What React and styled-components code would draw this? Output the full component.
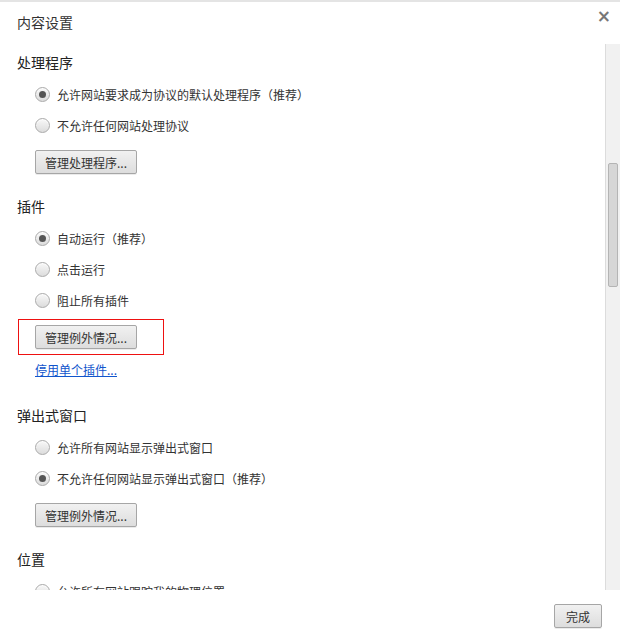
import React from 'react';
import styled, { createGlobalStyle } from 'styled-components';

const GlobalStyle = createGlobalStyle`
  html, body {
    margin: 0;
    padding: 0;
    background: #fff;
  }
  body {
    font-family: "Noto Sans CJK SC", "Noto Sans", "Liberation Sans", sans-serif;
  }
`;

const sections = [
  {
    title: '处理程序',
    options: [
      { label: '允许网站要求成为协议的默认处理程序（推荐）', checked: true },
      { label: '不允许任何网站处理协议' },
    ],
    button: '管理处理程序...',
  },
  {
    title: '插件',
    options: [
      { label: '自动运行（推荐）', checked: true },
      { label: '点击运行' },
      { label: '阻止所有插件' },
    ],
    button: '管理例外情况...',
    marked: true,
    link: '停用单个插件...',
  },
  {
    title: '弹出式窗口',
    options: [
      { label: '允许所有网站显示弹出式窗口' },
      { label: '不允许任何网站显示弹出式窗口（推荐）', checked: true },
    ],
    button: '管理例外情况...',
  },
  {
    title: '位置',
    options: [{ label: '允许所有网站跟踪我的物理位置' }],
  },
];

function App() {
  return (
    <>
      <GlobalStyle />
      <Dialog>
        <TitleBar>
          <Title>内容设置</Title>
          <Close>×</Close>
        </TitleBar>
        <Body>
          <Content>
            {sections.map((s) => (
              <Section key={s.title}>
                <Heading>{s.title}</Heading>
                {s.options.map((o) => (
                  <RadioRow key={o.label}>
                    <Radio checked={!!o.checked} />
                    <span>{o.label}</span>
                  </RadioRow>
                ))}
                {s.button && (
                  <ButtonWrap>
                    <Button>{s.button}</Button>
                    {s.marked && <Highlight />}
                  </ButtonWrap>
                )}
                {s.link && <Link href="#">{s.link}</Link>}
              </Section>
            ))}
          </Content>
          <Track>
            <Thumb offset={119} size={124} />
          </Track>
        </Body>
        <Footer>
          <Button wide>完成</Button>
        </Footer>
      </Dialog>
    </>
  );
}

const Dialog = styled.div`
  width: 620px;
  height: 641px;
  box-sizing: border-box;
  border-top: 2px solid #e4e4e4;
  display: flex;
  flex-direction: column;
  background: #fff;
  overflow: hidden;
`;

const TitleBar = styled.div`
  height: 42px;
  flex: none;
  display: flex;
  justify-content: space-between;
  align-items: flex-start;
  padding: 0 9px 0 17px;
`;

const Title = styled.div`
  margin-top: 11px;
  font-size: 14px;
  line-height: 18px;
  color: #333;
`;

const Close = styled.div`
  margin-top: 4px;
  font-family: "DejaVu Sans", sans-serif;
  font-size: 17px;
  font-weight: bold;
  line-height: 20px;
  color: #777;
`;

const Body = styled.div`
  height: 546px;
  flex: none;
  display: flex;
`;

const Content = styled.div`
  flex: 1;
  overflow: hidden;
  padding: 8px 0 0 17px;
`;

const Section = styled.div`
  padding-bottom: 22px;
`;

const Heading = styled.div`
  font-size: 14px;
  line-height: 20px;
  color: #222;
  margin-bottom: 7px;
`;

const RadioRow = styled.label`
  display: flex;
  align-items: center;
  gap: 7px;
  height: 31px;
  padding-left: 18px;
  font-size: 12px;
  color: #333;
`;

const Radio = styled.span`
  flex: none;
  width: 15px;
  height: 15px;
  box-sizing: border-box;
  border-radius: 50%;
  border: 1px solid #aaaaaa;
  background: linear-gradient(#f8f8f8, #dcdcdc);
  box-shadow: inset 0 1px 1px rgba(255, 255, 255, 0.8);
  display: flex;
  align-items: center;
  justify-content: center;
  &::after {
    content: '';
    width: 7px;
    height: 7px;
    border-radius: 50%;
    background: #555;
    display: ${(p) => (p.checked ? 'block' : 'none')};
  }
`;

const ButtonWrap = styled.div`
  position: relative;
  margin: 9px 0 0 18px;
  width: max-content;
`;

const Button = styled.button`
  display: block;
  height: 24px;
  padding: 0 ${(p) => (p.wide ? 11 : 9)}px;
  font-family: inherit;
  font-size: 12px;
  color: #333;
  border: 1px solid #a6a6a6;
  border-radius: 2px;
  background: linear-gradient(#f1f1f1, #dddddd);
  box-shadow: 0 1px 0 rgba(0, 0, 0, 0.08);
`;

const Highlight = styled.div`
  position: absolute;
  left: -17px;
  top: -6px;
  width: 146px;
  height: 36px;
  box-sizing: border-box;
  border: 1px solid #ee1111;
`;

const Link = styled.a`
  display: block;
  margin: 11px 0 3px 18px;
  font-size: 12px;
  line-height: 20px;
  color: #1155cc;
  text-decoration: underline;
`;

const Track = styled.div`
  width: 15px;
  flex: none;
  box-sizing: border-box;
  border-left: 1px solid #dcdcdc;
  background: #f1f1f1;
  padding-left: 2px;
`;

const Thumb = styled.div`
  margin-top: ${(p) => p.offset}px;
  height: ${(p) => p.size}px;
  width: 10px;
  box-sizing: border-box;
  border: 1px solid #b4b4b4;
  border-radius: 2px;
  background: #d6d6d6;
`;

const Footer = styled.div`
  flex: 1;
  display: flex;
  justify-content: flex-end;
  align-items: flex-start;
  padding: 14px 18px 0 0;
`;

export default App;
